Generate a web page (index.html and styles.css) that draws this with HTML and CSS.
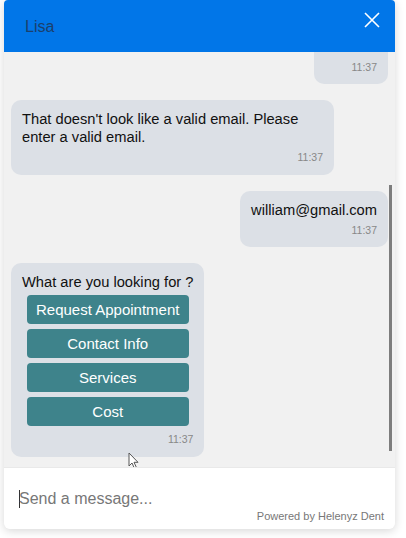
FILE: index.html
```html
<!DOCTYPE html>
<html lang="en">

<head>
    <meta charset="UTF-8">
    <meta name="viewport" content="width=device-width, initial-scale=1.0">
    <title>Chat - Lisa</title>
    <link rel="stylesheet" href="styles.css">
</head>

<body>
    <div class="chat-widget">
        <header class="chat-header">
            <span class="agent-name">Lisa</span>
            <button class="close-button" aria-label="Close">
                <svg width="16" height="16" viewBox="0 0 16 16">
                    <path d="M1 1 L15 15 M15 1 L1 15" stroke="#fff" stroke-width="1.6" fill="none" />
                </svg>
            </button>
        </header>

        <div class="chat-body">
            <div class="messages">
                <div class="bubble bubble-user bubble-clipped">
                    <span class="bubble-time">11:37</span>
                </div>
                <div class="bubble bubble-bot bubble-wide">
                    <p class="bubble-text">That doesn't look like a valid email. Please enter a valid email.</p>
                    <span class="bubble-time">11:37</span>
                </div>
                <div class="bubble bubble-user">
                    <p class="bubble-text">william@gmail.com</p>
                    <span class="bubble-time">11:37</span>
                </div>
                <div class="bubble bubble-bot bubble-options">
                    <p class="bubble-question">What are you looking for ?</p>
                    <div class="option-list">
                        <button class="option-button">Request Appointment</button>
                        <button class="option-button">Contact Info</button>
                        <button class="option-button">Services</button>
                        <button class="option-button">Cost</button>
                    </div>
                    <span class="bubble-time">11:37</span>
                </div>
            </div>
            <div class="scroll-thumb"></div>
            <svg class="mouse-pointer" width="12" height="18" viewBox="0 0 12 18">
                <path d="M1 1 L1 14 L4 11 L6.5 16.5 L8.5 15.6 L6 10.3 L10 10.3 Z" fill="#fff" stroke="#555" stroke-width="1" stroke-linejoin="round" />
            </svg>
        </div>

        <footer class="chat-footer">
            <div class="message-input"><span class="caret"></span>Send a message...</div>
            <div class="powered-by">Powered by Helenyz Dent</div>
        </footer>
    </div>
</body>

</html>
```

FILE: styles.css
```css
* {
    margin: 0;
    padding: 0;
    box-sizing: border-box;
}

body {
    font-family: 'Liberation Sans', Arial, sans-serif;
    background-color: #ffffff;
    color: #111;
    width: 406px;
    height: 538px;
    overflow: hidden;
}

.chat-widget {
    margin-left: 4px;
    width: 391px;
    height: 529px;
    display: flex;
    flex-direction: column;
    background-color: #f1f1f1;
    border-radius: 4px 4px 6px 6px;
    box-shadow: 0 2px 10px rgba(0, 0, 0, 0.16);
    overflow: hidden;
}

.chat-header {
    height: 52px;
    flex-shrink: 0;
    background-color: #0176e8;
    display: flex;
    align-items: center;
    justify-content: space-between;
    padding: 0 15px 0 21px;
}

.agent-name {
    font-size: 16px;
    color: #1b3f6c;
    margin-top: 2px;
}

.close-button {
    background: none;
    border: none;
    cursor: pointer;
    display: flex;
    margin-top: -12px;
}

.chat-body {
    flex: 1;
    position: relative;
    overflow: hidden;
}

.messages {
    height: 100%;
    display: flex;
    flex-direction: column;
    justify-content: flex-end;
    gap: 16px;
    padding: 0 7px 10px;
    overflow: hidden;
}

.bubble {
    flex-shrink: 0;
    background-color: #dce0e6;
    border-radius: 10px;
    padding: 10px 11px 10px;
    display: flex;
    flex-direction: column;
}

.bubble-user {
    align-self: flex-end;
}

.bubble-bot {
    align-self: flex-start;
}

.bubble-clipped {
    width: 74px;
    padding-top: 40px;
}

.bubble-wide {
    width: 323px;
    padding-bottom: 11px;
}

.bubble-options {
    padding-bottom: 11px;
}

.bubble-text {
    font-size: 14.7px;
    line-height: 18px;
}

.bubble-time {
    align-self: flex-end;
    margin-top: 5px;
    font-size: 10.5px;
    line-height: 13px;
    color: #888;
}

.bubble-question {
    font-size: 14.7px;
    line-height: 18px;
}

.option-list {
    display: flex;
    flex-direction: column;
    gap: 5px;
    margin-top: 4px;
    align-items: center;
}

.option-button {
    width: 162px;
    height: 29px;
    background-color: #3e838b;
    color: #fff;
    border: none;
    border-radius: 4px;
    font-family: 'Liberation Sans', Arial, sans-serif;
    font-size: 15px;
    cursor: pointer;
}

.option-list + .bubble-time {
    margin-top: 7px;
}

.scroll-thumb {
    position: absolute;
    right: 3px;
    top: 133px;
    width: 3px;
    height: 266px;
    background-color: #7d7d7d;
}

.mouse-pointer {
    position: absolute;
    left: 124px;
    top: 400px;
}

.chat-footer {
    height: 62px;
    flex-shrink: 0;
    background-color: #fff;
    border-top: 1px solid #e9e9e9;
    padding: 22px 11px 0 15px;
    display: flex;
    flex-direction: column;
}

.message-input {
    font-size: 16px;
    line-height: 18px;
    color: #777;
    display: flex;
    align-items: center;
}

.caret {
    display: inline-block;
    width: 1px;
    height: 18px;
    background-color: #333;
    margin-right: -1px;
}

.powered-by {
    align-self: flex-end;
    margin-top: 2px;
    font-size: 11px;
    color: #777;
}
```
